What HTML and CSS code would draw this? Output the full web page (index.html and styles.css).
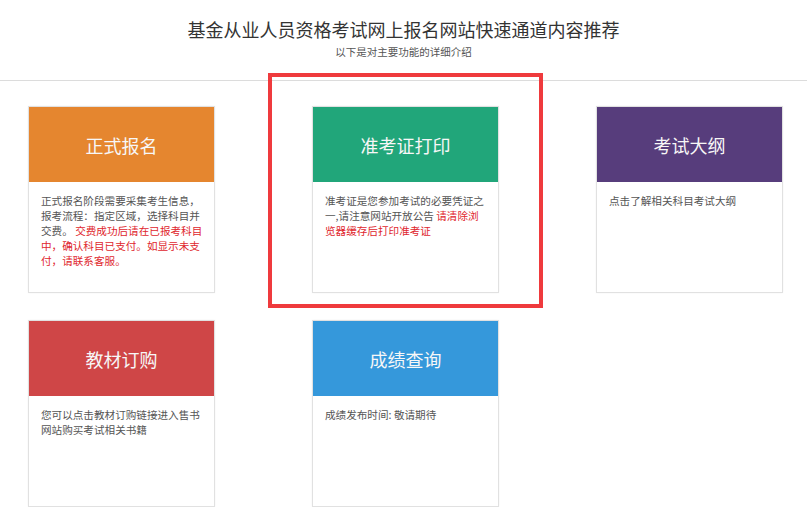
FILE: index.html
```html
<!DOCTYPE html>
<html lang="zh-CN">
<head>
    <meta charset="UTF-8">
    <meta name="viewport" content="width=device-width, initial-scale=1.0">
    <title>快速通道</title>
    <link rel="stylesheet" href="styles.css">
</head>
<body>
    <div class="head">
        <h1 class="title">基金从业人员资格考试网上报名网站快速通道内容推荐</h1>
        <p class="sub">以下是对主要功能的详细介绍</p>
    </div>
    <div class="grid">
        <div class="card">
            <div class="card-top orange">正式报名</div>
            <div class="card-body">正式报名阶段需要采集考生信息，报考流程：指定区域，选择科目并交费。 <span class="warn">交费成功后请在已报考科目中，确认科目已支付。如显示未支付，请联系客服。</span></div>
        </div>
        <div class="card">
            <div class="card-top green">准考证打印</div>
            <div class="card-body">准考证是您参加考试的必要凭证之一,请注意网站开放公告 <span class="warn">请清除浏览器缓存后打印准考证</span></div>
        </div>
        <div class="card">
            <div class="card-top purple">考试大纲</div>
            <div class="card-body">点击了解相关科目考试大纲</div>
        </div>
        <div class="card">
            <div class="card-top red">教材订购</div>
            <div class="card-body">您可以点击教材订购链接进入售书网站购买考试相关书籍</div>
        </div>
        <div class="card">
            <div class="card-top blue">成绩查询</div>
            <div class="card-body">成绩发布时间: 敬请期待</div>
        </div>
    </div>
    <div class="mark"></div>
</body>
</html>
```

FILE: styles.css
```css
body{
    margin: 0;
    background: #fff;
    font-family: "Noto Sans CJK SC", "Noto Sans", sans-serif;
    color: #555;
}
.head{
    text-align: center;
    padding: 17px 0 21px;
    border-bottom: 1px solid #dcdcdc;
}
.title{
    margin: 0;
    font-size: 18px;
    line-height: 24px;
    font-weight: normal;
    color: #333;
}
.sub{
    margin: 4px 0 0;
    font-size: 10.5px;
    line-height: 14px;
    color: #555;
}
.grid{
    display: grid;
    grid-template-columns: repeat(3, 187px);
    column-gap: 97px;
    row-gap: 27px;
    padding: 25px 0 0 28px;
}
.card{
    height: 187px;
    box-sizing: border-box;
    border: 1px solid #e1e1e1;
    box-shadow: 0 0 2px rgba(0,0,0,0.05);
    background: #fff;
}
.card-top{
    height: 75px;
    display: flex;
    align-items: center;
    justify-content: center;
    color: #f7f7f7;
    font-size: 18px;
}
.orange{ background: #e5862f; }
.green{ background: #21a67a; }
.purple{ background: #573d7c; }
.red{ background: #cf4647; }
.blue{ background: #3598db; }
.card-body{
    padding: 11px 10px 0 12px;
    font-size: 10.6px;
    line-height: 15px;
    color: #555;
}
.warn{
    color: #e0262d;
}
.mark{
    position: absolute;
    left: 268px;
    top: 73px;
    width: 267px;
    height: 227px;
    border: 4px solid #ef3a3d;
}
```
